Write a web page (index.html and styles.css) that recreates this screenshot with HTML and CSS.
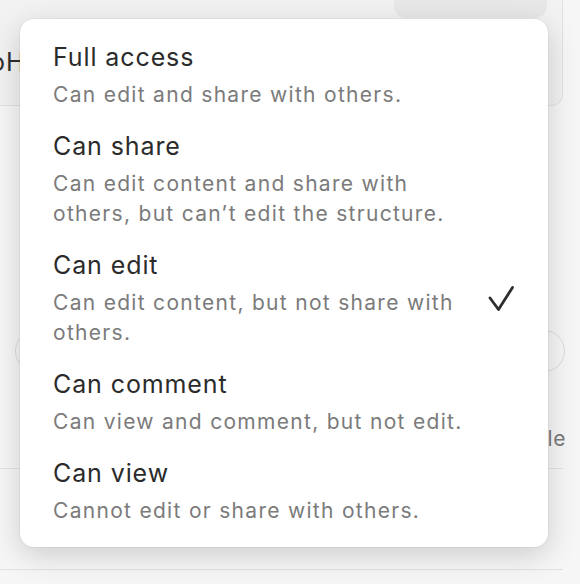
FILE: index.html
```html
<!DOCTYPE html>
<html>
<head>
<meta charset="utf-8">
<link rel="stylesheet" href="styles.css">
</head>
<body>
<div class="page">
  <div class="card">
    <div class="card-top">
      <div class="top-button">Copy link</div>
    </div>
    <div class="card-text">oH</div>
  </div>
  <div class="pill"></div>
  <div class="trail">le</div>
  <div class="rule first"></div>
  <div class="rule"></div>
</div>

<div class="menu">
  <div class="item">
    <div class="texts">
      <div class="title">Full access</div>
      <div class="desc">Can edit and share with others.</div>
    </div>
  </div>
  <div class="item">
    <div class="texts">
      <div class="title">Can share</div>
      <div class="desc">Can edit content and share with others, but can’t edit the structure.</div>
    </div>
  </div>
  <div class="item">
    <div class="texts">
      <div class="title">Can edit</div>
      <div class="desc">Can edit content, but not share with others.</div>
    </div>
    <svg class="check" width="26" height="26" viewBox="0 0 26 26"><path d="M2 12 L10.5 23.5 L24.5 1.5" fill="none" stroke="#2e2e2e" stroke-width="2.8" stroke-linecap="round" stroke-linejoin="round"/></svg>
  </div>
  <div class="item">
    <div class="texts">
      <div class="title">Can comment</div>
      <div class="desc">Can view and comment, but not edit.</div>
    </div>
  </div>
  <div class="item">
    <div class="texts">
      <div class="title">Can view</div>
      <div class="desc">Cannot edit or share with others.</div>
    </div>
  </div>
</div>
</body>
</html>
```

FILE: styles.css
```css
html, body {
  margin: 0;
  padding: 0;
}
body {
  background: #f6f6f6;
  font-family: Inter, "Noto Sans", "Liberation Sans", sans-serif;
  width: 580px;
  height: 584px;
  overflow: hidden;
  position: relative;
}
.page {
  width: 563px;
  display: flex;
  flex-direction: column;
}
.card {
  height: 106px;
  border-right: 1px solid #e2e2e2;
  border-bottom: 1px solid #e2e2e2;
  border-bottom-right-radius: 12px;
  background: #f2f2f2;
  box-sizing: border-box;
  display: flex;
  flex-direction: column;
}
.card-top {
  display: flex;
  justify-content: flex-end;
  padding-right: 15px;
}
.top-button {
  width: 153px;
  height: 18px;
  background: #e8e8e8;
  border-bottom-left-radius: 12px;
  border-bottom-right-radius: 12px;
  color: transparent;
  font-size: 12px;
  overflow: hidden;
}
.card-text {
  margin-top: 28px;
  margin-left: -10px;
  font-size: 25px;
  line-height: 32px;
  letter-spacing: 0.9px;
  color: #2f2f2f;
}
.pill {
  margin-top: 224px;
  margin-left: 15px;
  width: 550px;
  height: 42px;
  box-sizing: border-box;
  border: 1.5px solid #dcdcdc;
  border-radius: 21px;
}
.trail {
  margin-top: 52px;
  margin-right: -3px;
  text-align: right;
  font-size: 21px;
  line-height: 30px;
  letter-spacing: 0.6px;
  color: #7a7a7a;
}
.rule {
  height: 1px;
  background: #e2e2e2;
  margin-top: 100px;
}
.rule.first {
  margin-top: 14px;
}

.menu {
  position: absolute;
  left: 20px;
  top: 19px;
  width: 528px;
  height: 528px;
  box-sizing: border-box;
  background: #ffffff;
  border-radius: 14px;
  box-shadow: 0 0 0 1px rgba(0, 0, 0, 0.04), 0 8px 30px rgba(0, 0, 0, 0.17);
  padding: 22px 34px 21px 33px;
  display: flex;
  flex-direction: column;
  gap: 20px;
}
.item {
  display: flex;
  align-items: center;
  gap: 12px;
}
.texts {
  width: 425px;
  display: flex;
  flex-direction: column;
  gap: 7px;
}
.title {
  font-size: 25px;
  line-height: 32px;
  letter-spacing: 0.9px;
  color: #2b2b2b;
}
.desc {
  font-size: 21px;
  line-height: 30px;
  letter-spacing: 1.3px;
  color: #7b7b7b;
}
.check {
  margin-left: 10px;
  flex: none;
}
```
